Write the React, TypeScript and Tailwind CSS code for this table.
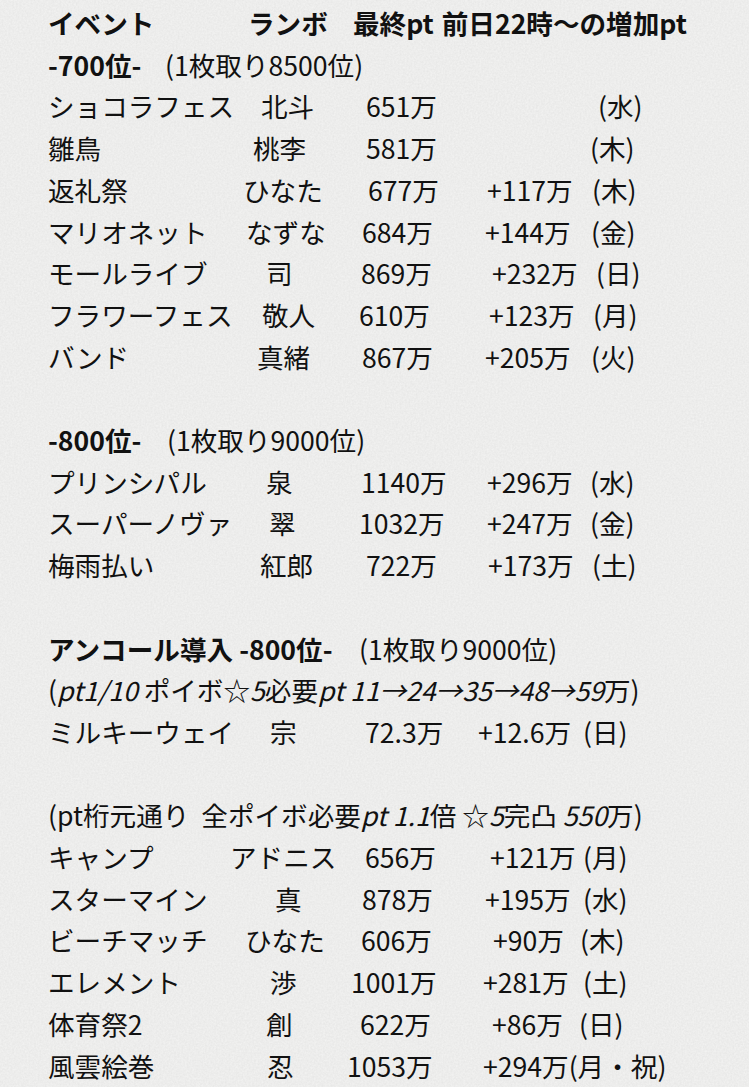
import React from "react";

type Cell = [string, string];

const font = "font-['Noto_Sans_CJK_JP','Noto_Sans',sans-serif]";

function Row({ cells }: { cells: Cell[] }) {
  return (
    <div className="flex whitespace-nowrap">
      {cells.map(([t, w], i) => (
        <span key={i} className={`shrink-0 ${w}`}>
          {t}
        </span>
      ))}
    </div>
  );
}

const first: Cell[][] = [
  [["ショコラフェス", "w-[213px]"], ["北斗", "w-[105px]"], ["651万", "w-[232px]"], ["(水)", ""]],
  [["雛鳥", "w-[205px]"], ["桃李", "w-[113px]"], ["581万", "w-[224px]"], ["(木)", ""]],
  [["返礼祭", "w-[195px]"], ["ひなた", "w-[125px]"], ["677万", "w-[119px]"], ["+117万", "w-[105px]"], ["(木)", ""]],
  [["マリオネット", "w-[198px]"], ["なずな", "w-[116px]"], ["684万", "w-[123px]"], ["+144万", "w-[106px]"], ["(金)", ""]],
  [["モールライブ", "w-[218px]"], ["司", "w-[95px]"], ["869万", "w-[131px]"], ["+232万", "w-[104px]"], ["(日)", ""]],
  [["フラワーフェス", "w-[214px]"], ["敬人", "w-[97px]"], ["610万", "w-[130px]"], ["+123万", "w-[104px]"], ["(月)", ""]],
  [["バンド", "w-[209px]"], ["真緒", "w-[105px]"], ["867万", "w-[123px]"], ["+205万", "w-[106px]"], ["(火)", ""]],
];

const second: Cell[][] = [
  [["プリンシパル", "w-[218px]"], ["泉", "w-[95px]"], ["1140万", "w-[126px]"], ["+296万", "w-[103px]"], ["(水)", ""]],
  [["スーパーノヴァ", "w-[221px]"], ["翠", "w-[90px]"], ["1032万", "w-[128px]"], ["+247万", "w-[103px]"], ["(金)", ""]],
  [["梅雨払い", "w-[212px]"], ["紅郎", "w-[106px]"], ["722万", "w-[122px]"], ["+173万", "w-[104px]"], ["(土)", ""]],
];

const fourth: Cell[][] = [
  [["キャンプ", "w-[182px]"], ["アドニス", "w-[135px]"], ["656万", "w-[125px]"], ["+121万", "w-[93px]"], ["(月)", ""]],
  [["スターマイン", "w-[227px]"], ["真", "w-[87px]"], ["878万", "w-[123px]"], ["+195万", "w-[98px]"], ["(水)", ""]],
  [["ビーチマッチ", "w-[197px]"], ["ひなた", "w-[116px]"], ["606万", "w-[132px]"], ["+90万", "w-[87px]"], ["(木)", ""]],
  [["エレメント", "w-[222px]"], ["渉", "w-[81px]"], ["1001万", "w-[132px]"], ["+281万", "w-[100px]"], ["(土)", ""]],
  [["体育祭2", "w-[218px]"], ["創", "w-[94px]"], ["622万", "w-[132px]"], ["+86万", "w-[87px]"], ["(日)", ""]],
  [["風雲絵巻", "w-[219px]"], ["忍", "w-[80px]"], ["1053万", "w-[136px]"], ["+294万(月・祝)", ""]],
];

export default function App() {
  return (
    <div className={`relative w-[749px] h-[1087px] overflow-hidden bg-[#f4f4f3] text-[#111111] ${font}`}>
      <svg className="absolute inset-0 w-full h-full pointer-events-none" aria-hidden>
        <filter id="paper">
          <feTurbulence type="fractalNoise" baseFrequency="0.55" numOctaves="3" seed="4" />
          <feColorMatrix type="matrix" values="0 0 0 0 0  0 0 0 0 0  0 0 0 0 0  0 0 0 0.06 0" />
        </filter>
        <rect width="100%" height="100%" filter="url(#paper)" />
      </svg>

      <div className="relative pl-[48px] pt-[2px] text-[26.6px] leading-[41.7px]">
        <div className="flex whitespace-nowrap font-bold">
          <span className="w-[200px] shrink-0">イベント</span>
          <span className="w-[105px] shrink-0">ランボ</span>
          <span className="mr-[8px] shrink-0">最終pt</span>
          <span>前日22時〜の増加pt</span>
        </div>
        <div className="flex whitespace-nowrap">
          <span className="w-[117px] shrink-0 font-bold">-700位-</span>
          <span>(1枚取り8500位)</span>
        </div>
        {first.map((r, i) => (
          <Row key={i} cells={r} />
        ))}
        <div className="h-[41.7px]" />

        <div className="flex whitespace-nowrap">
          <span className="w-[119px] shrink-0 font-bold">-800位-</span>
          <span>(1枚取り9000位)</span>
        </div>
        {second.map((r, i) => (
          <Row key={i} cells={r} />
        ))}
        <div className="h-[41.7px]" />

        <div className="flex whitespace-nowrap">
          <span className="w-[311px] shrink-0 font-bold">アンコール導入 -800位-</span>
          <span>(1枚取り9000位)</span>
        </div>
        <div className="whitespace-nowrap">
          (<i>pt1/10</i> ポイボ☆<i>5</i>必要<i>pt 11→24→35→48→59</i>万)
        </div>
        <Row
          cells={[
            ["ミルキーウェイ", "w-[222px]"],
            ["宗", "w-[95px]"],
            ["72.3万", "w-[113px]"],
            ["+12.6万", "w-[105px]"],
            ["(日)", ""],
          ]}
        />
        <div className="h-[41.7px]" />

        <div className="whitespace-nowrap">
          (pt桁元通り&nbsp; 全ポイボ必要<i>pt 1.1</i>倍 ☆<i>5</i>完凸 <i>550</i>万)
        </div>
        {fourth.map((r, i) => (
          <Row key={i} cells={r} />
        ))}
      </div>
    </div>
  );
}
